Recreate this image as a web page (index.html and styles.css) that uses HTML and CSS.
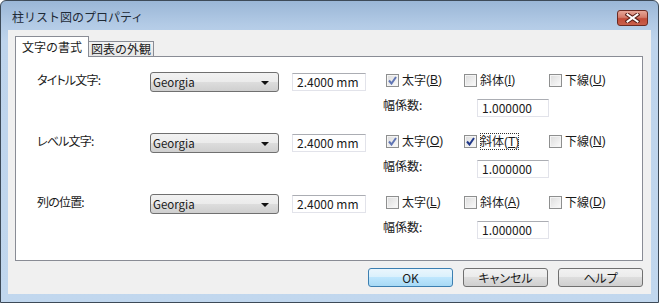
FILE: index.html
```html
<!DOCTYPE html>
<html lang="ja">
<head>
    <meta charset="UTF-8">
    <title>柱リスト図のプロパティ</title>
    <link rel="stylesheet" href="styles.css">
</head>
<body>
    <div class="window">
        <div class="titlebar">
            <span class="title">柱リスト図のプロパティ</span>
            <div class="close">
                <svg width="15" height="10" viewBox="0 0 15 10">
                    <path d="M2.5 1.5 L12.5 8.5 M12.5 1.5 L2.5 8.5" stroke="#5a1f18" stroke-width="4" stroke-linecap="square"/>
                    <path d="M2.5 1.5 L12.5 8.5 M12.5 1.5 L2.5 8.5" stroke="#ffffff" stroke-width="2" stroke-linecap="square"/>
                </svg>
            </div>
        </div>
        <div class="client">
            <div class="tabs">
                <div class="tab active">文字の書式</div>
                <div class="tab">図表の外観</div>
            </div>
            <div class="panel">
                <div class="row">
                    <div class="line">
                        <span class="label">タイトル文字:</span>
                        <div class="combo"><span>Georgia</span><i class="arrow"></i></div>
                        <div class="field size">2.4000 mm</div>
                        <div class="check c1"><span class="box checked dim"><svg width="9" height="9" viewBox="0 0 9 9"><path d="M1 4.5 L3.5 7.5 L8 1" fill="none" stroke="currentColor" stroke-width="2"/></svg></span>太字<span class="key" lang="en">(<u>B</u>)</span></div>
                        <div class="check c2"><span class="box"></span>斜体<span class="key" lang="en">(<u>I</u>)</span></div>
                        <div class="check"><span class="box"></span>下線<span class="key" lang="en">(<u>U</u>)</span></div>
                    </div>
                    <div class="line sub">
                        <span class="label">幅係数:</span>
                        <div class="field scale">1.000000</div>
                    </div>
                </div>
                <div class="row">
                    <div class="line">
                        <span class="label">レベル文字:</span>
                        <div class="combo"><span>Georgia</span><i class="arrow"></i></div>
                        <div class="field size">2.4000 mm</div>
                        <div class="check c1"><span class="box checked dim"><svg width="9" height="9" viewBox="0 0 9 9"><path d="M1 4.5 L3.5 7.5 L8 1" fill="none" stroke="currentColor" stroke-width="2"/></svg></span>太字<span class="key" lang="en">(<u>O</u>)</span></div>
                        <div class="check c2"><span class="box checked"><svg width="9" height="9" viewBox="0 0 9 9"><path d="M1 4.5 L3.5 7.5 L8 1" fill="none" stroke="currentColor" stroke-width="2"/></svg></span><span class="focus">斜体<span class="key" lang="en">(<u>T</u>)</span></span></div>
                        <div class="check"><span class="box"></span>下線<span class="key" lang="en">(<u>N</u>)</span></div>
                    </div>
                    <div class="line sub">
                        <span class="label">幅係数:</span>
                        <div class="field scale">1.000000</div>
                    </div>
                </div>
                <div class="row">
                    <div class="line">
                        <span class="label">列の位置:</span>
                        <div class="combo"><span>Georgia</span><i class="arrow"></i></div>
                        <div class="field size">2.4000 mm</div>
                        <div class="check c1"><span class="box"></span>太字<span class="key" lang="en">(<u>L</u>)</span></div>
                        <div class="check c2"><span class="box"></span>斜体<span class="key" lang="en">(<u>A</u>)</span></div>
                        <div class="check"><span class="box"></span>下線<span class="key" lang="en">(<u>D</u>)</span></div>
                    </div>
                    <div class="line sub">
                        <span class="label">幅係数:</span>
                        <div class="field scale">1.000000</div>
                    </div>
                </div>
            </div>
            <div class="buttons">
                <div class="btn default">OK</div>
                <div class="btn">キャンセル</div>
                <div class="btn">ヘルプ</div>
            </div>
        </div>
    </div>
</body>
</html>
```

FILE: styles.css
```css
* {
    box-sizing: border-box;
}

body {
    margin: 0;
    font-family: "Noto Sans CJK JP", "Noto Sans", sans-serif;
    font-size: 12px;
    color: #1a1a1a;
    background-color: #ffffff;
}

.window {
    width: 659px;
    height: 303px;
    border: 1px solid #3d4a58;
    border-radius: 6px 6px 0 0;
    background: linear-gradient(#9ab6d6, #b3cbe6 24px, #bed4ec 40px, #c1d7ee);
    display: flex;
    flex-direction: column;
    overflow: hidden;
}

.titlebar {
    height: 29px;
    display: flex;
    justify-content: space-between;
    align-items: flex-start;
    padding: 0 10px 0 11px;
}

.title {
    margin-top: 8px;
    line-height: 16px;
    font-size: 12px;
    color: #1e2a36;
}

.close {
    width: 31px;
    height: 16px;
    margin-top: 9px;
    border: 1px solid #6b2a22;
    border-radius: 3px;
    background: linear-gradient(#e6a597, #d47c6b 45%, #c14b38 55%, #c9604c);
    display: flex;
    align-items: center;
    justify-content: center;
}

.client {
    height: 264px;
    margin: 0 7px;
    padding: 6px 8px 0 7px;
    background-color: #f0f0f0;
}

.tabs {
    height: 20px;
    display: flex;
    align-items: flex-end;
}

.tab {
    height: 15px;
    width: 66px;
    margin-left: -1px;
    border: 1px solid #898c95;
    border-bottom: none;
    background: linear-gradient(#f3f3f3, #e6e6e6);
    text-align: center;
    line-height: 14px;
    font-size: 12px;
}

.tab.active {
    position: relative;
    z-index: 1;
    height: 21px;
    width: 74px;
    margin-left: 0;
    margin-bottom: -1px;
    background: #ffffff;
    line-height: 19px;
}

.panel {
    height: 205px;
    border: 1px solid #898c95;
    background-color: #ffffff;
    padding: 15px 0 0 21px;
    display: flex;
    flex-direction: column;
    gap: 16px;
}

.row {
    display: flex;
    flex-direction: column;
    gap: 7px;
}

.line {
    display: flex;
    align-items: flex-start;
    height: 20px;
}

.line.sub {
    height: 18px;
    padding-left: 346px;
}

.label {
    width: 113px;
    line-height: 16px;
    font-feature-settings: "palt";
    letter-spacing: -0.8px;
}

.sub .label {
    width: 94px;
    line-height: 12px;
    letter-spacing: 0;
}

.combo {
    width: 129px;
    height: 20px;
    border: 1px solid #707070;
    border-radius: 3px;
    background: linear-gradient(#f2f2f2, #ebebeb 50%, #dddddd 50%, #cfcfcf);
    display: flex;
    align-items: center;
    justify-content: space-between;
    padding: 0 9px 0 2px;
    line-height: 16px;
    font-size: 11.5px;
}

.arrow {
    width: 0;
    height: 0;
    border-left: 4px solid transparent;
    border-right: 4px solid transparent;
    border-top: 4px solid #111111;
    margin-top: 2px;
}

.field {
    height: 18px;
    margin-top: 1px;
    border: 1px solid #e2e3ea;
    border-top-color: #abadb3;
    background: #ffffff;
    padding-left: 4px;
    line-height: 16px;
}

.field.size {
    width: 74px;
    margin-left: 13px;
    margin-right: 20px;
}

.field.scale {
    width: 72px;
    margin-top: 0;
}

.check {
    display: flex;
    align-items: center;
    height: 16px;
    line-height: 16px;
}

.check .box {
    margin-right: 3px;
}

.key {
    font-family: "Liberation Sans", sans-serif;
    font-size: 12px;
}

.check.c1 {
    width: 78px;
}

.check.c2 {
    width: 85px;
}

.check u {
    text-underline-offset: 1px;
}

.box {
    width: 13px;
    height: 13px;
    border: 1px solid #8e8f8f;
    background: linear-gradient(135deg, #dcdcdc, #fbfbfb);
    box-shadow: inset 0 0 0 1px #f4f4f4;
    display: flex;
    align-items: center;
    justify-content: center;
    color: #21398a;
}

.box.dim {
    color: #6075b4;
}

.focus {
    outline: 1px dotted #333333;
    outline-offset: -1px;
}

.buttons {
    display: flex;
    justify-content: flex-end;
    gap: 10px;
    margin-top: 7px;
}

.btn {
    width: 85px;
    height: 19px;
    border: 1px solid #707070;
    border-radius: 3px;
    background: linear-gradient(#f2f2f2, #ebebeb 50%, #dddddd 50%, #cfcfcf);
    text-align: center;
    line-height: 17px;
    font-feature-settings: "palt";
}

.btn.default {
    border-color: #3c7fb1;
    background: linear-gradient(#eaf6fd, #d9f0fc 50%, #bee6fd 50%, #a7d9f5);
}
```
